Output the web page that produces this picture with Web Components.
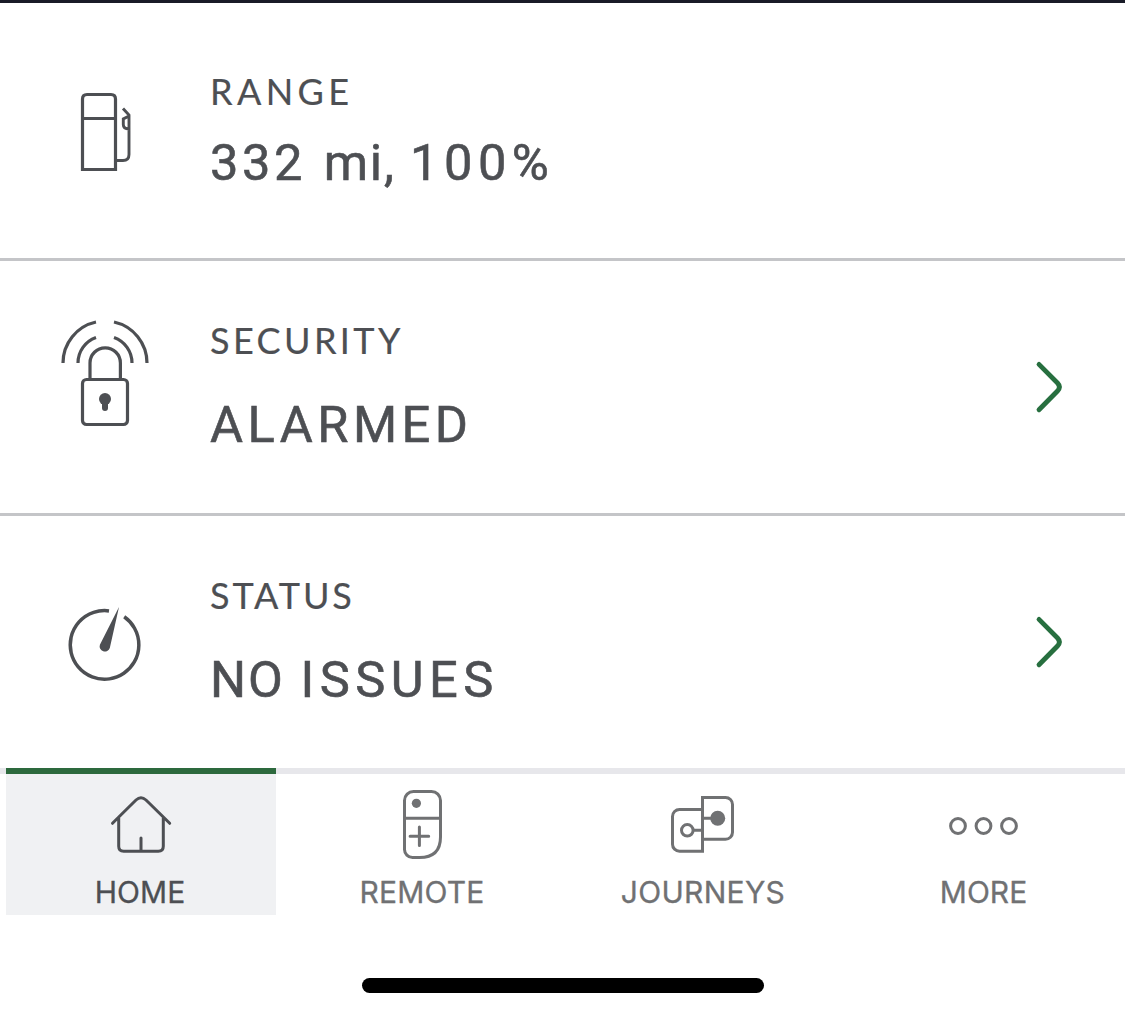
<!DOCTYPE html>
<html lang="en">
<head>
<meta charset="utf-8">
<meta name="viewport" content="width=device-width, initial-scale=1">
<title>Vehicle</title>
<style>
  body {
    margin: 0;
    background: #fff;
  }
</style>
</head>
<body>
<vehicle-app>
  <info-row style="height: 258px; --text-top: 66px; --text-gap: 20px">
    <svg slot="icon" width="110" height="129" viewBox="0 -14 110 129" fill="none" stroke="currentColor" stroke-width="3.200">
      <path d="M32.5 89.5V19q0-4.5 4.5-4.5h24q4.5 0 4.5 4.5v70.5zM32.5 38.5h33" />
      <path d="M67 80.5h6q6 0 6-6V35l-6-6.500M79 36l-5.700 3v5.500q0 4.500 5.700 4.500" stroke-width="2.900" />
    </svg>
    <tracked-text slot="label" style="--track: 4.4px">RANGE</tracked-text>
    <tracked-text slot="value" style="--track: 3.6px">332<span style="letter-spacing: 5px"> </span><span style="letter-spacing: 1.800px">mi, </span><span style="letter-spacing: 5.500px">100%</span></tracked-text>
  </info-row>
  <info-row link style="height: 255px">
    <svg slot="icon" width="110" height="150" viewBox="0 2 110 150" fill="none" stroke="currentColor" stroke-width="3.200">
      <rect x="32.5" y="69.5" width="45" height="45" rx="4" />
      <path d="M40 69V53a15.200 15.200 0 0 1 30.400 0V69" />
      <path d="M28 53a27 27 0 0 1 18-25.500M82 53a27 27 0 0 0-18-25.500M13 53a42 42 0 0 1 33-41M97 53a42 42 0 0 0-33-41" />
      <circle cx="55" cy="89" r="6" fill="currentColor" stroke="none" />
      <path d="M55 90v8" stroke-width="6" stroke-linecap="round" />
    </svg>
    <tracked-text slot="label" style="--track: 3.400px">SECURITY</tracked-text>
    <tracked-text slot="value" style="--track: 4.500px">ALARMED</tracked-text>
  </info-row>
  <info-row link last style="height: 252px">
    <svg slot="icon" width="110" height="110" viewBox="0 -3 110 110" fill="none" stroke="currentColor" stroke-width="3.500">
      <path d="M59 20.900A34.300 34.300 0 1 0 74.200 26.800" />
      <path d="M69 17L59.800 58A5.200 5.200 0 1 1 49.900 54.800Z" fill="currentColor" stroke="none" />
    </svg>
    <tracked-text slot="label" style="--track: 2.900px">STATUS</tracked-text>
    <tracked-text slot="value" style="--track: 2px">NO <span style="letter-spacing: 5.500px; margin-left: 1px">ISSUES</span></tracked-text>
  </info-row>

  <tab-bar slot="footer">
    <tab-item active>
      <svg slot="icon" width="100" height="96" fill="none" stroke="currentColor" stroke-width="3" stroke-linecap="round">
        <path d="M21.500 49.300L45 26q5-4.500 10 0L78.700 49.300M27.700 44v28.300q0 5 5 5h34.600q5 0 5-5V44M50 64v13" />
      </svg>
      <tracked-text style="margin-right: 2px">HOME</tracked-text>
    </tab-item>
    <tab-item>
      <svg slot="icon" width="100" height="96" fill="none" stroke="currentColor" stroke-width="3">
        <path d="M41.500 17.500h18a9 9 0 0 1 9 9V63q0 20.500-21 20.500h-7a8 8 0 0 1-8-8v-49a9 9 0 0 1 9-9zM32.500 44.300h36" />
        <path d="M47.400 53v18.600M38.100 62.300h18.600" stroke-linecap="round" />
        <circle cx="44.400" cy="29.300" r="4.600" fill="currentColor" stroke="none" />
      </svg>
      <tracked-text style="--track: 0.200px">REMOTE</tracked-text>
    </tab-item>
    <tab-item>
      <svg slot="icon" width="100" height="96" fill="none" stroke="currentColor" stroke-width="3">
        <path d="M49.500 35.500h-23a7 7 0 0 0-7 7v27.700a7 7 0 0 0 7 7h23V23.500h23a7 7 0 0 1 7 7v27.800a7 7 0 0 1-7 7h-23" />
        <circle cx="34.300" cy="56.300" r="5.800" />
        <path d="M40 56.300h9.500M49.500 44.300H60" />
        <circle cx="64.700" cy="44.300" r="7.500" fill="currentColor" stroke="none" />
      </svg>
      <tracked-text style="--track: 0.300px">JOURNEYS</tracked-text>
    </tab-item>
    <tab-item>
      <svg slot="icon" width="100" height="96" fill="none" stroke="currentColor" stroke-width="3">
        <circle cx="24" cy="52" r="7.400" />
        <circle cx="49.500" cy="52" r="7.400" />
        <circle cx="75" cy="52" r="7.400" />
      </svg>
      <tracked-text style="margin-right: 1px">MORE</tracked-text>
    </tab-item>
  </tab-bar>
  <home-indicator slot="footer"></home-indicator>
</vehicle-app>

<script>
"use strict";

function attach(element, markup) {
  element.attachShadow({ mode: "open" }).innerHTML = markup;
}

class VehicleApp extends HTMLElement {
  connectedCallback() {
    attach(this, `
<style>
  :host {
    display: flex;
    flex-direction: column;
    box-sizing: border-box;
    height: 1017px;
    overflow: hidden;
    border-top: 3px solid #191b28;
    color: #4d4f53;
    background: #fff;
  }
</style>
<slot></slot>
<slot name="footer"></slot>`);
  }
}

// Text whose letter spacing is set with --track
class TrackedText extends HTMLElement {
  connectedCallback() {
    attach(this, `
<style>
  :host {
    display: block;
    white-space: nowrap;
    letter-spacing: var(--track, 0);
  }
</style>
<slot></slot>`);
  }
}

class InfoRow extends HTMLElement {
  connectedCallback() {
    attach(this, `
<style>
  :host {
    display: grid;
    grid-template-columns: 210px 1fr auto;
    box-sizing: border-box;
    flex: none;
    border-bottom: 3px solid #c4c5c8;
  }

  :host([last]) {
    border-bottom: none;
  }

  .icon {
    display: flex;
    align-items: center;
    justify-content: center;
  }

  .text {
    display: flex;
    flex-direction: column;
    gap: var(--text-gap, 33px);
    padding-top: var(--text-top, 57px);
  }

  .label {
    font: 36px/44px Lato, sans-serif;
    -webkit-text-stroke: 0.2px currentColor;
  }

  .value {
    font: 50.6px/60px Roboto, sans-serif;
    -webkit-text-stroke: 0.6px currentColor;
  }

  .chevron {
    display: none;
    align-self: center;
    margin-right: 45px;
    color: #276f3f;
  }

  :host([link]) .chevron {
    display: block;
  }
</style>
<div class="icon"><slot name="icon"></slot></div>
<div class="text">
  <div class="label"><slot name="label"></slot></div>
  <div class="value"><slot name="value"></slot></div>
</div>
<svg class="chevron" width="60" height="74" fill="none" stroke="currentColor" stroke-width="4.800" stroke-linecap="round">
  <path d="M19 14.400L37.500 33q3.800 4 0 8L19 59.800" />
</svg>`);
  }
}

class TabBar extends HTMLElement {
  connectedCallback() {
    attach(this, `
<style>
  :host {
    display: grid;
    grid-template-columns: repeat(4, 281px);
    flex: none;
    height: 147px;
    background: linear-gradient(#e7e7eb 6px, transparent 6px);
  }
</style>
<slot></slot>`);
  }
}

class TabItem extends HTMLElement {
  connectedCallback() {
    attach(this, `
<style>
  :host {
    display: flex;
    flex-direction: column;
    align-items: center;
    gap: 4px;
    margin: 0 5px 0 6px;
    border-top: 6px solid transparent;
    color: #707173;
    font: 30px/36px Inter, sans-serif;
    -webkit-text-stroke: 0.3px currentColor;
  }

  :host([active]) {
    border-top-color: #2d693d;
    background: #f0f1f3;
    color: #4d4f53;
  }
</style>
<slot name="icon"></slot>
<slot></slot>`);
  }
}

class HomeIndicator extends HTMLElement {
  connectedCallback() {
    attach(this, `
<style>
  :host {
    display: block;
    flex: none;
    width: 402px;
    height: 15px;
    margin: 63px 0 0 362px;
    border-radius: 8px;
    background: #000;
  }
</style>`);
  }
}

customElements.define("vehicle-app", VehicleApp);
customElements.define("tracked-text", TrackedText);
customElements.define("info-row", InfoRow);
customElements.define("tab-bar", TabBar);
customElements.define("tab-item", TabItem);
customElements.define("home-indicator", HomeIndicator);
</script>
</body>
</html>
